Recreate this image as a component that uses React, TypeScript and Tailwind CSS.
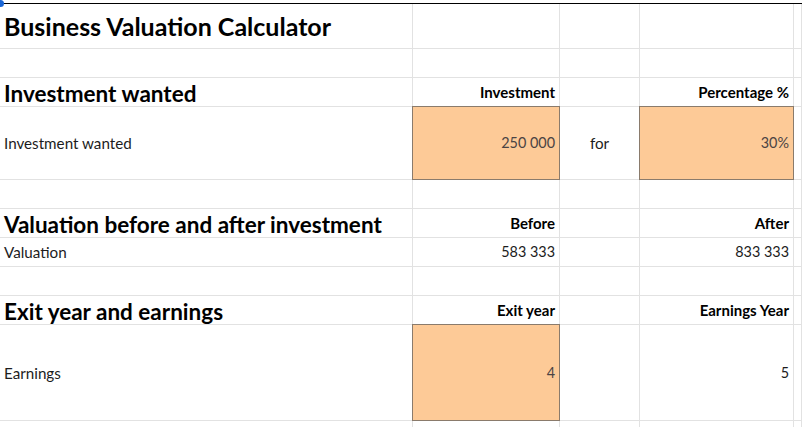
import type { ReactNode } from 'react'

type Cell = {
  text?: string
  kind?: 'title' | 'heading' | 'label' | 'colhead' | 'value' | 'input' | 'center'
}

const ROWS: Cell[][] = [
  [{ text: 'Business Valuation Calculator', kind: 'title' }, {}, {}, {}, {}],
  [{}, {}, {}, {}, {}],
  [
    { text: 'Investment wanted', kind: 'heading' },
    { text: 'Investment', kind: 'colhead' },
    {},
    { text: 'Percentage %', kind: 'colhead' },
    {},
  ],
  [
    { text: 'Investment wanted', kind: 'label' },
    { text: '250 000', kind: 'input' },
    { text: 'for', kind: 'center' },
    { text: '30%', kind: 'input' },
    {},
  ],
  [{}, {}, {}, {}, {}],
  [
    { text: 'Valuation before and after investment', kind: 'heading' },
    { text: 'Before', kind: 'colhead' },
    {},
    { text: 'After', kind: 'colhead' },
    {},
  ],
  [
    { text: 'Valuation', kind: 'label' },
    { text: '583 333', kind: 'value' },
    {},
    { text: '833 333', kind: 'value' },
    {},
  ],
  [{}, {}, {}, {}, {}],
  [
    { text: 'Exit year and earnings', kind: 'heading' },
    { text: 'Exit year', kind: 'colhead' },
    {},
    { text: 'Earnings Year', kind: 'colhead' },
    {},
  ],
  [
    { text: 'Earnings', kind: 'label' },
    { text: '4', kind: 'input' },
    {},
    { text: '5', kind: 'value' },
    {},
  ],
  [{}, {}, {}, {}, {}],
]

function GridCell({ cell }: { cell: Cell }) {
  const base = 'flex min-w-0 overflow-visible whitespace-nowrap border-b border-r border-[#e2e2e2]'
  let inner: ReactNode = null
  let cls = base

  switch (cell.kind) {
    case 'title':
      cls += ' items-end pb-[7px] pl-[4px]'
      inner = <span className="text-[25px] font-bold leading-[30px] text-black">{cell.text}</span>
      break
    case 'heading':
      cls += ' items-end pb-0 pl-[4px]'
      inner = <span className="text-[22.5px] font-bold leading-[24px] text-black">{cell.text}</span>
      break
    case 'label':
      cls += ' items-center pl-[4px]'
      inner = <span className="text-[15.2px] leading-[18px] text-[#1c1c1c]">{cell.text}</span>
      break
    case 'colhead':
      cls += ' items-end justify-end pb-[5px] pr-[4px]'
      inner = <span className="text-[15px] font-bold leading-[18px] text-black">{cell.text}</span>
      break
    case 'value':
      cls += ' items-center justify-end pr-[4px]'
      inner = <span className="text-[14.4px] leading-[18px] text-[#1c1c1c]">{cell.text}</span>
      break
    case 'center':
      cls += ' items-center justify-center'
      inner = <span className="text-[15.2px] leading-[18px] text-[#1c1c1c]">{cell.text}</span>
      break
    case 'input':
      cls =
        'flex items-center justify-end whitespace-nowrap border border-[#8a7b6c] bg-[#fdca97] pr-[4px] -ml-px -mt-px'
      inner = <span className="text-[14.4px] leading-[18px] text-[#4b4444]">{cell.text}</span>
      break
  }

  return <div className={cls}>{inner}</div>
}

export default function App() {
  return (
    <div className="relative h-[427px] w-[802px] overflow-hidden bg-white pt-[3px] font-['Lato',sans-serif]">
      <div className="grid grid-cols-[413px_147px_80px_154px_1fr] grid-rows-[45px_29px_29px_73px_29px_29px_29px_29px_29px_96px_29px] border-t border-black">
        {ROWS.map((row, r) => row.map((cell, c) => <GridCell key={`${r}-${c}`} cell={cell} />))}
      </div>
      <span className="absolute left-[-3px] top-0 h-[7px] w-[7px] rounded-full bg-[#1a66d6]" />
    </div>
  )
}
